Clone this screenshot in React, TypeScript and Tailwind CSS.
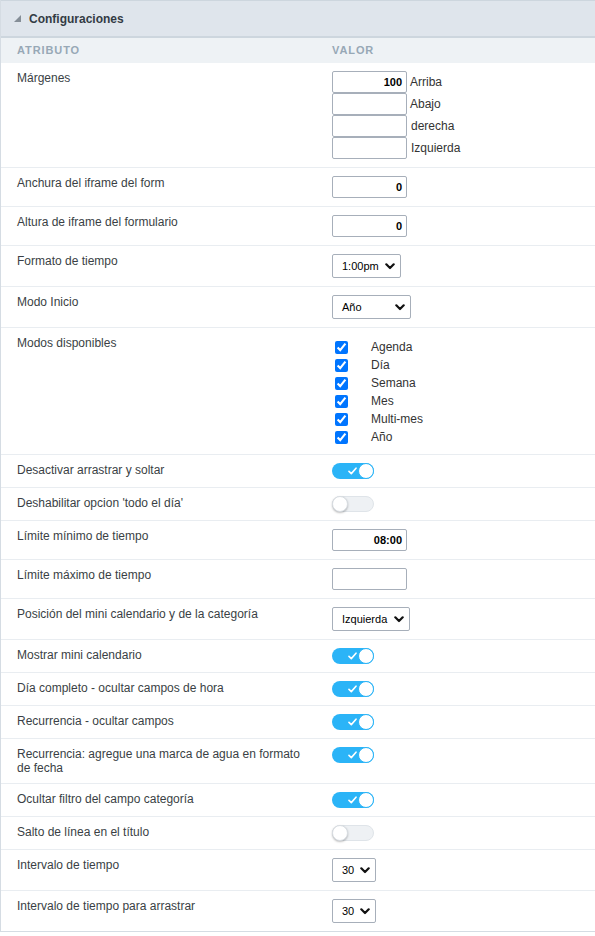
import React from "react";

type Row =
  | { label: string; kind: "margins" }
  | { label: string; kind: "input"; value: string }
  | { label: string; kind: "select"; value: string; width: string }
  | { label: string; kind: "checks"; items: string[] }
  | { label: string; kind: "toggle"; on: boolean };

const ROWS: Row[] = [
  { label: "Márgenes", kind: "margins" },
  { label: "Anchura del iframe del form", kind: "input", value: "0" },
  { label: "Altura de iframe del formulario", kind: "input", value: "0" },
  { label: "Formato de tiempo", kind: "select", value: "1:00pm", width: "w-[69px]" },
  { label: "Modo Inicio", kind: "select", value: "Año", width: "w-[79px]" },
  {
    label: "Modos disponibles",
    kind: "checks",
    items: ["Agenda", "Día", "Semana", "Mes", "Multi-mes", "Año"],
  },
  { label: "Desactivar arrastrar y soltar", kind: "toggle", on: true },
  { label: "Deshabilitar opcion 'todo el día'", kind: "toggle", on: false },
  { label: "Límite mínimo de tiempo", kind: "input", value: "08:00" },
  { label: "Límite máximo de tiempo", kind: "input", value: "" },
  {
    label: "Posición del mini calendario y de la categoría",
    kind: "select",
    value: "Izquierda",
    width: "w-[78px]",
  },
  { label: "Mostrar mini calendario", kind: "toggle", on: true },
  { label: "Día completo - ocultar campos de hora", kind: "toggle", on: true },
  { label: "Recurrencia - ocultar campos", kind: "toggle", on: true },
  {
    label: "Recurrencia: agregue una marca de agua en formato de fecha",
    kind: "toggle",
    on: true,
  },
  { label: "Ocultar filtro del campo categoría", kind: "toggle", on: true },
  { label: "Salto de línea en el título", kind: "toggle", on: false },
  { label: "Intervalo de tiempo", kind: "select", value: "30", width: "w-[44px]" },
  { label: "Intervalo de tiempo para arrastrar", kind: "select", value: "30", width: "w-[44px]" },
];

const MARGIN_LABELS = ["Arriba", "Abajo", "derecha", "Izquierda"];

function TextBox({ value }: { value: string }) {
  return (
    <div className="flex h-[22px] w-[75px] items-center justify-end rounded-[2px] border border-[#a7afba] bg-white px-[4px] text-[11px] font-semibold text-black">
      {value}
    </div>
  );
}

function Chevron() {
  return (
    <svg width="10" height="7" viewBox="0 0 10 7" aria-hidden>
      <path d="M1.3 1.3 5 5 8.7 1.3" fill="none" stroke="#111" strokeWidth="2.2" strokeLinecap="round" strokeLinejoin="round" />
    </svg>
  );
}

function SelectBox({ value, width }: { value: string; width: string }) {
  return (
    <div
      className={`flex h-[24px] ${width} items-center justify-between rounded-[2px] border border-[#a7afba] bg-white pl-[9px] pr-[5px] text-[11px] text-black`}
    >
      <span>{value}</span>
      <Chevron />
    </div>
  );
}

function Toggle({ on }: { on: boolean }) {
  if (on) {
    return (
      <div className="flex h-[16px] w-[42px] items-center justify-between rounded-full bg-[#2bb4f7] pl-[16px]">
        <svg width="9" height="8" viewBox="0 0 9 8" aria-hidden>
          <path d="M1 4.4 3.3 6.6 8 1.2" fill="none" stroke="#fff" strokeWidth="1.6" strokeLinecap="round" strokeLinejoin="round" />
        </svg>
        <div className="size-[16px] rounded-full border border-[#2bb4f7] bg-white" />
      </div>
    );
  }
  return (
    <div className="flex h-[16px] w-[42px] items-center rounded-full border border-[#dfe4e9] bg-[#eef1f4]">
      <div className="-ml-px size-[16px] rounded-full border border-[#d8dde2] bg-white shadow-[0_1px_2px_rgba(0,0,0,0.25)]" />
    </div>
  );
}

function Value({ row }: { row: Row }) {
  switch (row.kind) {
    case "margins":
      return (
        <div className="flex flex-col">
          {["100", "", "", ""].map((v, i) => (
            <div key={i} className="flex items-center">
              <TextBox value={v} />
              <span className={`text-[12px] text-[#333] ${i < 2 ? "ml-[3px]" : "ml-[4px]"}`}>
                {MARGIN_LABELS[i]}
              </span>
            </div>
          ))}
        </div>
      );
    case "input":
      return <TextBox value={row.value} />;
    case "select":
      return <SelectBox value={row.value} width={row.width} />;
    case "toggle":
      return <Toggle on={row.on} />;
    case "checks":
      return (
        <div className="flex flex-col pt-[2px]">
          {row.items.map((it) => (
            <label key={it} className="flex h-[18px] items-center">
              <input
                type="checkbox"
                checked
                readOnly
                className="ml-[3px] size-[13px] accent-[#0075ff]"
              />
              <span className="ml-[23px] text-[12px] text-[#333]">{it}</span>
            </label>
          ))}
        </div>
      );
  }
}

export default function App() {
  return (
    <div
      className="min-h-[936px] w-[595px] bg-white"
      style={{ fontFamily: "Arial, 'Liberation Sans', sans-serif" }}
    >
      <div className="border-b border-l border-[#d5dce3]">
        <div className="flex h-[38px] items-center border-t border-b-2 border-[#cdd6de] bg-[#dfe5ec] pl-[13px]">
          <svg width="7" height="7" viewBox="0 0 7 7" aria-hidden>
            <polygon points="7,0 7,7 0,7" fill="#858e97" />
          </svg>
          <span className="ml-[8px] text-[12px] font-bold text-[#333b44]">Configuraciones</span>
        </div>
        <div className="grid h-[25px] grid-cols-[331px_1fr] items-center bg-[#eef2f5] text-[11px] font-bold tracking-[0.9px] text-[#97a8b6]">
          <span className="pl-4">ATRIBUTO</span>
          <span>VALOR</span>
        </div>
        {ROWS.map((row) => (
          <div
            key={row.label}
            className="grid grid-cols-[331px_1fr] border-b border-[#e9edf1] py-2 last:border-b-0"
          >
            <div className="pl-4 pr-4 text-[12px] leading-[14px] text-[#3a3f45]">{row.label}</div>
            <div>
              <Value row={row} />
            </div>
          </div>
        ))}
      </div>
    </div>
  );
}
